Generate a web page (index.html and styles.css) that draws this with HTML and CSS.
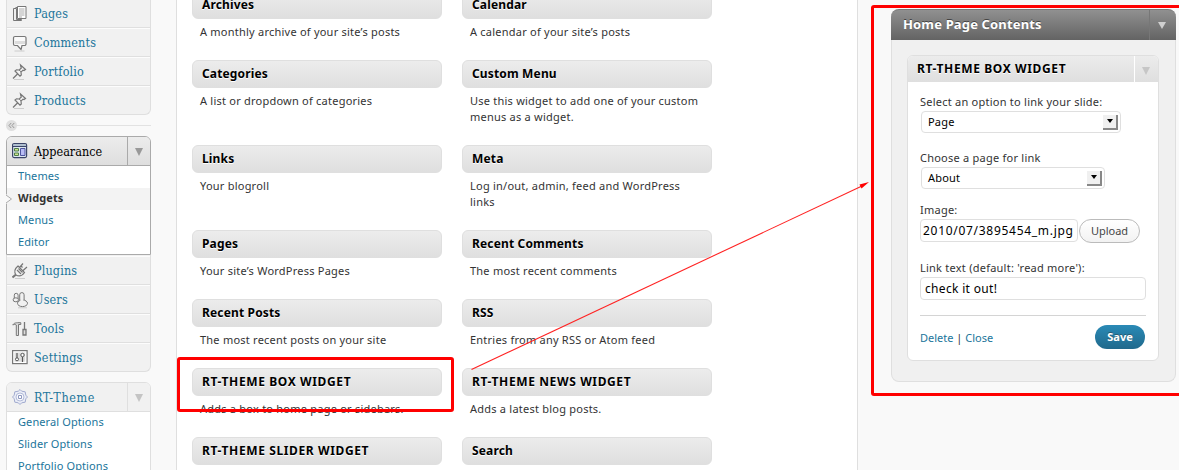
FILE: index.html
```html
<!DOCTYPE html>
<html lang="en">
<head>
<meta charset="utf-8">
<title>Widgets</title>
<link rel="stylesheet" href="styles.css">
</head>
<body>
<div class="page">
  <nav class="sidebar">
    <ul class="menu menu-top">
      <li class="item"><svg class="icon" viewBox="0 0 16 18"><path d="M1.5 3.5h3v11h5v1h-8zM3.5 2.5h3v10" fill="#eee" stroke="#777"/><path d="M5.500 1.500h8.500v12h-8.500z" fill="#fff" stroke="#777"/><path d="M7 4h5.500M7 6h5.500M7 8h5.500M7 10h5.500M7 12h3" stroke="#aaa"/></svg><span>Pages</span></li>
      <li class="item"><svg class="icon" viewBox="0 0 16 18"><path d="M3 2.500h9.500a1.500 1.500 0 0 1 1.500 1.500v6a1.500 1.500 0 0 1-1.500 1.500H10l-1 4-3.500-4H3A1.500 1.500 0 0 1 1.500 10V4A1.500 1.500 0 0 1 3 2.500z" fill="#fafafa" stroke="#777" stroke-width="1.200"/><path d="M3 7h10v3H3z" fill="#ddd"/><path d="M2.500 17h10" stroke="#ccc"/></svg><span>Comments</span></li>
      <li class="item"><svg class="icon" viewBox="0 0 16 18"><path d="M1 15.500l5-5" stroke="#777" stroke-width="1.300"/><path d="M8.500 2l5 4.500-1.500 1-1-.3-2 2 .3 2.800-1.300 1.200L3 8l1.500-1.200 2.800.2 2-2-.5-1.500z" fill="#f4f4f4" stroke="#777" stroke-width="1.200"/><path d="M7.200 7l2 2" stroke="#777"/><path d="M2 16.500h10" stroke="#ccc"/></svg><span>Portfolio</span></li>
      <li class="item"><svg class="icon" viewBox="0 0 16 18"><path d="M1 15.500l5-5" stroke="#777" stroke-width="1.300"/><path d="M8.500 2l5 4.500-1.500 1-1-.3-2 2 .3 2.800-1.300 1.200L3 8l1.500-1.200 2.800.2 2-2-.5-1.500z" fill="#f4f4f4" stroke="#777" stroke-width="1.200"/><path d="M7.200 7l2 2" stroke="#777"/><path d="M2 16.500h10" stroke="#ccc"/></svg><span>Products</span></li>
    </ul>
    <div class="separator"><svg class="fold" viewBox="0 0 11 11"><circle cx="5.500" cy="5.500" r="5.500" fill="#dfdfdf"/><path d="M5.200 3l-2.200 2.500 2.200 2.500M8.200 3L6 5.500 8.200 8" fill="none" stroke="#999"/></svg></div>
    <section class="open current">
      <div class="head"><svg class="icon" viewBox="0 0 16 18"><rect x=".6" y="1.600" width="14" height="14" rx="1.500" fill="#dde8ee" stroke="#3b4468" stroke-width="1.200"/><path d="M1 2.500h13v2H1z" fill="#aebfd0"/><path d="M1 4.500h13" stroke="#3b4468"/><path d="M2.500 6.500h4v2.500h-4zM2.500 11h4v2.500h-4z" fill="#cfe58a" stroke="#4d7c4a"/><path d="M8.500 6.500h4.500v7H8.500z" fill="#b9bdf5" stroke="#4e55a0"/></svg><span>Appearance</span><i class="toggle"><b class="tri"></b></i></div>
      <ul class="sub">
        <li>Themes</li>
        <li class="active"><svg class="notch" viewBox="0 0 7 10"><path d="M0 0l6 5-6 5z" fill="#f9f9f9"/><path d="M0 1l5.500 4L0 9" fill="none" stroke="#aaa"/></svg>Widgets</li>
        <li>Menus</li>
        <li>Editor</li>
      </ul>
    </section>
    <ul class="menu menu-bottom">
      <li class="item"><svg class="icon" viewBox="0 0 16 18"><path d="M.5 15.500l3.500-3" stroke="#777" stroke-width="2"/><path d="M6 4l6.500 6.500C10 14 6.500 14.500 4 13c-2-3-1-6.500 2-9z" fill="#f4f4f4" stroke="#777" stroke-width="1.200"/><path d="M7.500 5.500L11 1.500M10.800 8.800L15 5M5 8l4 4M6.500 6.500l4 4M9 4l1.500 1.500" fill="none" stroke="#777" stroke-width="1.200"/><path d="M3 16.500h10" stroke="#ccc"/></svg><span>Plugins</span></li>
      <li class="item"><svg class="icon" viewBox="0 0 16 18"><g fill="#f1f1f1" stroke="#777"><path d="M2.300 8V4.200a1.900 1.900 0 0 1 3.800 0V8z"/><ellipse cx="3.800" cy="8.800" rx="2.700" ry="2"/><path d="M7.700 9V3.800a2.200 2.200 0 0 1 4.400 0V9z"/><ellipse cx="10.500" cy="12.300" rx="5" ry="3.300"/></g><path d="M8.400 8h3v2.500h-3z" fill="#f1f1f1"/><path d="M6 16.800h9" stroke="#ccc"/></svg><span>Users</span></li>
      <li class="item"><svg class="icon" viewBox="0 0 16 18"><path d="M.8 5c1-2 3-2.500 8-2.300V4.500H6.500v11H4.300V5C3 4 2 4.500.8 5z" fill="#ddd" stroke="#777"/><path d="M12.500 2v7M11 9.500h3v5.500h-3z" fill="#ddd" stroke="#777" stroke-width="1.300"/></svg><span>Tools</span></li>
      <li class="item"><svg class="icon" viewBox="0 0 16 18"><rect x=".6" y="1.600" width="14.500" height="13" fill="#fff" stroke="#777" stroke-width="1.200"/><rect x="2.500" y="3.500" width="10.700" height="9.200" fill="#ddd"/><path d="M5 4v5M10.500 8v5" stroke="#555" stroke-width="1.200"/><circle cx="5" cy="10.300" r="1.500" fill="#fff" stroke="#555"/><circle cx="10.500" cy="6" r="1.700" fill="#fff" stroke="#555"/></svg><span>Settings</span></li>
    </ul>
    <section class="open plain">
      <div class="head"><svg class="icon" viewBox="0 0 16 18"><path d="M8 1.500l1.700 1.700 3.500.6.600 3.400L15.500 9l-1.700 1.800-.6 3.400-3.500.6L8 16.500l-1.700-1.700-3.500-.6-.6-3.400L.5 9l1.700-1.800.6-3.400 3.500-.6z" fill="#e9ecf6" stroke="#a3acd0"/><circle cx="8" cy="9" r="4" fill="#f8f9fd" stroke="#b3bbd8"/><path d="M6.500 7.500h3v3h-3z" fill="#fff" stroke="#8f99c0"/></svg><span>RT-Theme</span><i class="toggle"><b class="tri"></b></i></div>
      <ul class="sub">
        <li>General Options</li>
        <li>Slider Options</li>
        <li>Portfolio Options</li>
      </ul>
    </section>
  </nav>

  <main class="available">
    <article><h4>Archives</h4><p>A monthly archive of your site’s posts</p></article>
    <article><h4>Calendar</h4><p>A calendar of your site’s posts</p></article>
    <article><h4>Categories</h4><p>A list or dropdown of categories</p></article>
    <article><h4>Custom Menu</h4><p>Use this widget to add one of your custom<br>menus as a widget.</p></article>
    <article><h4>Links</h4><p>Your blogroll</p></article>
    <article><h4>Meta</h4><p>Log in/out, admin, feed and WordPress<br>links</p></article>
    <article><h4>Pages</h4><p>Your site’s WordPress Pages</p></article>
    <article><h4>Recent Comments</h4><p>The most recent comments</p></article>
    <article><h4>Recent Posts</h4><p>The most recent posts on your site</p></article>
    <article><h4>RSS</h4><p>Entries from any RSS or Atom feed</p></article>
    <article><h4 class="caps">RT-THEME BOX WIDGET</h4><p>Adds a box to home page or sidebars.</p></article>
    <article><h4 class="caps">RT-THEME NEWS WIDGET</h4><p>Adds a latest blog posts.</p></article>
    <article><h4 class="caps">RT-THEME SLIDER WIDGET</h4></article>
    <article><h4>Search</h4></article>
  </main>

  <aside class="panel">
    <header class="panel-head"><span>Home Page Contents</span><i class="toggle"><b class="tri"></b></i></header>
    <div class="widget">
      <div class="widget-head"><span class="caps">RT-THEME BOX WIDGET</span><i class="toggle"><b class="tri"></b></i></div>
      <form class="form">
        <label>Select an option to link your slide:</label>
        <div class="select wide"><span>Page</span><i class="drop"><b></b></i></div>
        <label class="gap-l">Choose a page for link</label>
        <div class="select"><span>About</span><i class="drop"><b></b></i></div>
        <label class="gap-m">Image:</label>
        <div class="row"><div class="input file"><span>2010/07/3895454_m.jpg</span></div><div class="upload">Upload</div></div>
        <label class="gap-n">Link text (default: 'read more'):</label>
        <div class="input">check it out!</div>
        <div class="actions"><span><a>Delete</a> | <a>Close</a></span><div class="save">Save</div></div>
      </form>
    </div>
  </aside>
</div>

<div class="mark mark-widget"></div>
<div class="mark mark-panel"></div>
<svg class="arrow" viewBox="0 0 1179 470"><path d="M471.500 369.500L862 186" stroke="#f22" stroke-width="1.100"/><path d="M869 182l-7.500 6.500-2-4z" fill="#f00"/></svg>
</body>
</html>
```
FILE: styles.css
```css
* { box-sizing: border-box; }
body {
  margin: 0;
  width: 1179px;
  height: 470px;
  overflow: hidden;
  position: relative;
  background: #f9f9f9;
  color: #333;
  font: 11px/16px "Noto Sans", sans-serif;
}
ul, h4, p { margin: 0; padding: 0; list-style: none; }
i, b { font-style: normal; display: block; }
.page { display: flex; height: 470px; }

/* Admin menu */
.sidebar { width: 176px; flex: none; padding-left: 6px; }
.menu { width: 145px; border: 1px solid #dfdfdf; background: #f1f1f1; }
.menu-top { border-top: 0; border-radius: 0 0 6px 6px; height: 115px; }
.menu-bottom { height: 117px; border-top: 0; border-radius: 0 0 6px 6px; padding-top: 1px; }
.item {
  height: 29px;
  display: flex;
  align-items: center;
  padding-left: 5px;
  gap: 6px;
  border-bottom: 1px solid #dfdfdf;
  border-top: 1px solid #fcfcfc;
  font: 12.5px/18px "DejaVu Serif Condensed", "DejaVu Serif", serif;
  font-stretch: condensed;
  letter-spacing: .15px;
  color: #21759b;
}
.menu-top .item:first-child { height: 28px; border-top: 0; }
.item:last-child { border-bottom: 0; }
.icon { width: 16px; height: 18px; flex: none; fill: none; }
.separator { height: 21px; width: 145px; display: flex; align-items: center; }
.separator::after { content: ""; height: 1px; flex: 1; background: #e2e2e2; }
.fold { width: 11px; height: 11px; }
.open { width: 145px; border: 1px solid #aaa; border-radius: 6px 6px 0 0; background: #fff; }
.open.current { height: 119px; }
.open.plain { margin-top: 10px; border-color: #dfdfdf; height: 100px; }
.head {
  height: 29px;
  display: flex;
  align-items: center;
  padding-left: 5px;
  gap: 6px;
  border-bottom: 1px solid #aaa;
  border-radius: 5px 5px 0 0;
  background: linear-gradient(#ececec, #dedede);
  font: 12.5px/18px "DejaVu Serif Condensed", "DejaVu Serif", serif;
  font-stretch: condensed;
  color: #000;
}
.head span { padding-top: 2px; }
.plain .head { background: #f1f1f1; border-color: #dfdfdf; color: #21759b; letter-spacing: .6px; }
.toggle { display: flex; align-items: center; justify-content: center; flex: none; }
.tri { border: 4.500px solid transparent; border-top: 8px solid #999; border-bottom: 0; }
.head .toggle { margin-left: auto; width: 23px; height: 28px; border-left: 1px solid #aaa; padding-top: 2px; }
.plain .head .toggle { border-color: #dfdfdf; }
.plain .tri { border-top-color: #c4c4c4; }
.sub li { height: 22px; line-height: 19px; padding-left: 11px; color: #21759b; position: relative; letter-spacing: .1px; }
.sub .active { background: #f3f3f3; color: #333; font-weight: bold; }
.notch { position: absolute; left: -1px; top: 6px; width: 7px; height: 10px; }

/* Available widgets */
.available {
  width: 682px;
  flex: none;
  background: #fff;
  border: solid #dfdfdf;
  border-width: 0 1px;
  padding-left: 15px;
  display: grid;
  grid-template-columns: 250px 250px;
  column-gap: 20px;
  align-content: start;
  margin-top: -9px;
}
.available p { margin: 5px 0 20px; padding-left: 8px; white-space: nowrap; letter-spacing: .23px; }
h4 {
  height: 28px;
  border: 1px solid #dfdfdf;
  border-radius: 6px;
  background: linear-gradient(#ececec, #dfdfdf);
  color: #000;
  font-size: 12px;
  line-height: 26px;
  padding-left: 9px;
  text-shadow: 0 1px 0 #fff;
  white-space: nowrap;
  letter-spacing: .15px;
}
.caps { letter-spacing: .62px; }

/* Sidebar panel */
.panel {
  width: 285px;
  height: 373px;
  margin: 9px 0 0 33px;
  border: 1px solid #dfdfdf;
  border-top: 0;
  border-radius: 8px;
  background: #f0f0f0;
}
.panel-head {
  height: 31px;
  margin: 0 -1px;
  border-radius: 8px 8px 0 0;
  border-top: 1px solid #777;
  background: linear-gradient(#909090, #636363);
  color: #fff;
  font-size: 13px;
  font-weight: bold;
  line-height: 29px;
  letter-spacing: .15px;
  text-shadow: 0 -1px 0 #444;
  padding-left: 12px;
  display: flex;
  justify-content: space-between;
}
.panel-head .toggle { width: 27px; border-left: 1px solid #777; padding-right: 2px; }
.panel-head .tri { border-width: 7px 4px 0; border-top-color: #d0d0d0; }
.widget { width: 252px; height: 306px; margin: 15px 0 0 15px; background: #fff; border: 1px solid #dfdfdf; border-radius: 6px; }
.widget-head {
  height: 26px;
  display: flex;
  justify-content: space-between;
  padding-left: 9px;
  border-radius: 5px 5px 0 0;
  background: linear-gradient(#ececec, #dfdfdf);
  color: #000;
  font-size: 12px;
  font-weight: bold;
  line-height: 26px;
  text-shadow: 0 1px 0 #fff;
}
.widget-head .toggle { width: 24px; border-left: 1px solid #fff; padding: 3px 2px 0 0; }
.widget-head .tri { border-top-color: #c6c6c6; }
.form { padding: 12px 12px 0; width: 251px; }
label { display: block; height: 16px; white-space: nowrap; letter-spacing: .24px; }
.gap-l { margin-top: 17px; }
.gap-m { margin-top: 13px; }
.gap-n { margin-top: 17px; }
.select {
  width: 184px;
  height: 22px;
  margin: 1px 0 0 1px;
  border: 1px solid #dfdfdf;
  border-radius: 4px;
  display: flex;
  align-items: center;
  justify-content: space-between;
  padding: 0 2px 0 6px;
  color: #000;
  letter-spacing: .2px;
}
.select.wide { width: 200px; }
.drop { width: 15px; height: 15px; background: #f0f0f0; border: solid #888; border-width: 0 2px 2px 0; display: flex; align-items: center; justify-content: center; }
.drop b { border: 3px solid transparent; border-top: 4px solid #000; border-bottom: 0; }
.row { display: flex; gap: 1px; margin-top: 1px; }
.input { width: 226px; height: 23px; margin-top: 1px; border: 1px solid #dfdfdf; border-radius: 4px; padding-left: 4px; font-size: 12px; line-height: 21px; color: #000; white-space: nowrap; letter-spacing: .32px; }
.input.file { width: 158px; margin-top: 0; padding-left: 2px; letter-spacing: .71px; }
.upload { width: 61px; height: 24px; border: 1px solid #bbb; border-radius: 12px; background: linear-gradient(#fff, #f2f2f2); text-align: center; line-height: 22px; color: #464646; }
.actions { width: 226px; margin-top: 15px; border-top: 1px solid #d4d4d4; padding-top: 9px; display: flex; justify-content: space-between; line-height: 26px; }
.actions a { color: #21759b; }
.save { width: 50px; height: 24px; margin-right: 1px; border-radius: 12px; background: linear-gradient(#2a8ab6, #20698c); color: #fff; font-weight: bold; text-align: center; line-height: 24px; text-shadow: 0 -1px 0 #2a5a70; }

/* Annotations */
.mark { position: absolute; border: 3px solid #f00; border-radius: 3px; }
.mark-widget { left: 177px; top: 357px; width: 277px; height: 55px; }
.mark-panel { left: 871px; top: 5px; width: 312px; height: 391px; }
.arrow { position: absolute; left: 0; top: 0; width: 1179px; height: 470px; }
```
